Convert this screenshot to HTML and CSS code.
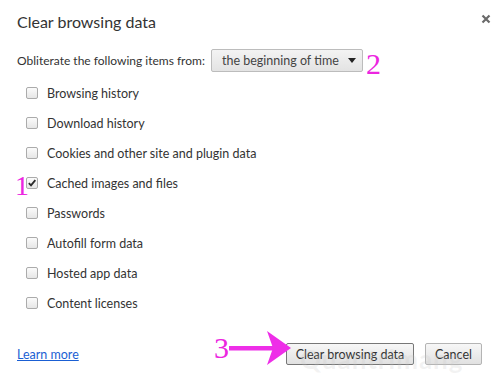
FILE: index.html
```html
<!DOCTYPE html>
<html>
<head>
<meta charset="utf-8">
<link rel="stylesheet" href="styles.css">
</head>
<body>
<div class="dialog">
  <div class="header">
    <div class="title">Clear browsing data</div>
    <div class="close">
      <svg width="10" height="10" viewBox="0 0 10 10"><path d="M1.5 1.5L8.5 8.5M8.5 1.5L1.5 8.5" stroke="#6a6a6a" stroke-width="2.2"/></svg>
    </div>
  </div>
  <div class="period">
    <span class="period-label">Obliterate the following items from:</span>
    <div class="select">
      <span>the beginning of time</span>
      <span class="caret"></span>
    </div>
    <span class="mark mark-2">2</span>
  </div>
  <ul class="items">
    <li><span class="box"></span>Browsing history</li>
    <li><span class="box"></span>Download history</li>
    <li><span class="box"></span>Cookies and other site and plugin data</li>
    <li class="checked"><span class="mark mark-1">1</span><span class="box"><svg width="12" height="12" viewBox="0 0 12 12"><path d="M2.2 6.2L4.8 8.8L10 2.6" fill="none" stroke="#2b2b2b" stroke-width="2.2"/></svg></span>Cached images and files</li>
    <li><span class="box"></span>Passwords</li>
    <li><span class="box"></span>Autofill form data</li>
    <li><span class="box"></span>Hosted app data</li>
    <li><span class="box"></span>Content licenses</li>
  </ul>
  <div class="footer">
    <a class="learn" href="#">Learn more</a>
    <div class="buttons">
      <span class="annot-3">
        <span class="mark mark-3">3</span>
        <svg width="64" height="38" viewBox="0 0 64 38"><rect x="0" y="17" width="44" height="4.5" fill="#ee2ee8"/><path d="M38 2L62 19L38 36L44 19Z" fill="#ee2ee8"/></svg>
      </span>
      <button class="btn primary">Clear browsing data</button>
      <button class="btn">Cancel</button>
    </div>
  </div>
  <div class="watermark">Quantrimang</div>
</div>
</body>
</html>
```
FILE: styles.css
```css
* { box-sizing: border-box; }
html, body { margin: 0; padding: 0; background: #fff; }
.dialog {
  position: relative;
  width: 500px;
  height: 380px;
  overflow: hidden;
  font-family: "Lato", "Open Sans", sans-serif;
  font-size: 12.5px;
  color: #333;
}
.header {
  display: flex;
  justify-content: space-between;
  align-items: center;
  height: 32px;
  padding: 12px 9px 0 17px;
}
.title { font-size: 16px; line-height: 20px; color: #333; }
.close { width: 10px; height: 10px; margin-top: -6px; }
.close svg { display: block; }
.period {
  display: flex;
  align-items: center;
  margin-top: 17px;
  padding-left: 17px;
  height: 23px;
}
.period-label { margin-right: 6px; white-space: nowrap; font-size: 12px; }
.select {
  display: flex;
  align-items: center;
  justify-content: space-between;
  width: 152px;
  height: 23px;
  padding: 0 6px 0 10px;
  border: 1px solid #bcbcbc;
  border-radius: 2px;
  background: linear-gradient(#f3f3f3, #e3e3e3);
  color: #444;
  white-space: nowrap;
}
.caret {
  width: 0; height: 0;
  border-left: 4.5px solid transparent;
  border-right: 4.5px solid transparent;
  border-top: 5px solid #222;
}
.mark {
  font-family: "Liberation Serif", serif;
  color: #ec25e0;
  line-height: 1;
}
.mark-2 { font-size: 30px; margin-left: 3px; margin-top: 6px; }
.items {
  list-style: none;
  margin: 6px 0 0 0;
  padding: 0 0 0 26px;
}
.items li {
  position: relative;
  display: flex;
  align-items: center;
  height: 30px;
}
.box {
  display: flex;
  align-items: center;
  justify-content: center;
  width: 12px;
  height: 12px;
  margin-right: 9px;
  border: 1px solid #ababab;
  border-radius: 2px;
  background: linear-gradient(#fbfbfb, #e6e6e6);
}
.box svg { display: block; }
.mark-1 {
  position: absolute;
  left: -11px;
  top: 4px;
  font-size: 28px;
}
.footer {
  display: flex;
  justify-content: space-between;
  align-items: center;
  margin-top: 25px;
  padding: 0 18px 0 17px;
  height: 22px;
}
.learn { color: #1a5fd3; text-decoration: underline; font-size: 12.5px; }
.buttons { position: relative; display: flex; gap: 11px; }
.btn {
  height: 22px;
  padding: 0 4px;
  font-family: "Lato", "Open Sans", sans-serif;
  font-size: 12.5px;
  color: #333;
  white-space: nowrap;
  border: 1px solid #b4b4b4;
  border-radius: 2px;
  background: linear-gradient(#f7f7f7, #e1e1e1);
}
.btn.primary { width: 128px; border-color: #777; }
.btn:last-child { width: 57px; }
.annot-3 {
  position: absolute;
  left: -72px;
  top: -14px;
  display: flex;
  align-items: center;
}
.mark-3 { font-size: 30px; }
.annot-3 svg { display: block; }
.watermark {
  position: absolute;
  left: 300px;
  top: 344px;
  font-family: "Lato", sans-serif;
  font-size: 26px;
  line-height: 30px;
  font-weight: 700;
  color: rgba(200, 200, 200, 0.22);
  letter-spacing: 1px;
  pointer-events: none;
}
```
